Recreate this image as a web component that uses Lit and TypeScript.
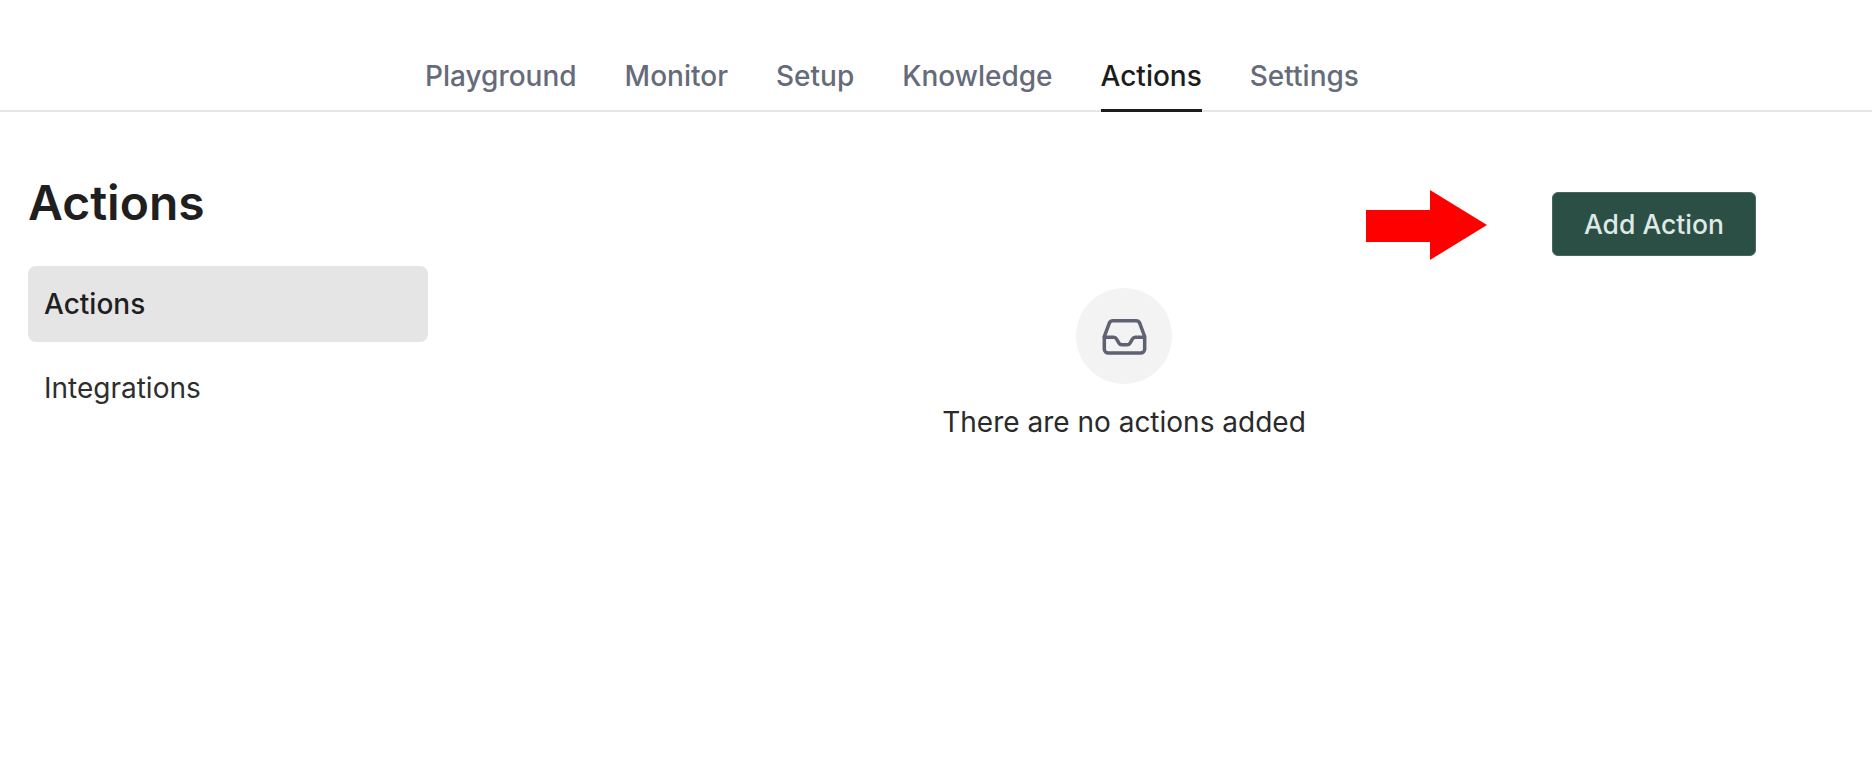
import { LitElement, html, css } from "lit";
import { customElement } from "lit/decorators.js";

@customElement("app-root")
export class AppRoot extends LitElement {
  static styles = css`
    :host { display: block; position: relative; width: 100%; height: 762px; background: #fff; overflow: hidden; font-family: Inter, "Liberation Sans", sans-serif; color: #1f1f1f; }
    .tabs { height: 112px; box-sizing: border-box; border-bottom: 2px solid #e6e6e6; display: flex; justify-content: flex-start; gap: 48px; padding-left: 425px; align-items: flex-end; }
    .tab { height: 76px; box-sizing: border-box; font-size: 28px; font-weight: 500; line-height: 34px; padding-top: 23px; color: #666b7a; margin-bottom: -2px; border-bottom: 3px solid transparent; }
    .tab.active { color: #1c1c1c; border-bottom-color: #1c1c1c; }
    .body { display: flex; }
    .side { width: 400px; margin-left: 28px; padding-top: 66px; flex: none; }
    h1 { margin: 0 0 38px; font-size: 48px; line-height: 50px; font-weight: 600; color: #1f1f1f; }
    .item { display: flex; align-items: center; height: 76px; box-sizing: border-box; padding-left: 16px; border-radius: 8px; font-size: 28px; margin-bottom: 8px; color: #2e2e2e; }
    .item.active { background: #e5e5e5; color: #1f1f1f; font-weight: 500; }
    .main { flex: 1; margin: 0 116px 0 64px; padding-top: 80px; display: flex; flex-direction: column; }
    .bar { display: flex; justify-content: flex-end; }
    .btn { width: 204px; height: 64px; box-sizing: border-box; background: #2c4f45; border: 1px solid #47685e; border-radius: 6px; color: #dfeae6; font: 500 26.5px Inter, "Liberation Sans", sans-serif; display: flex; align-items: center; justify-content: center; }
    .empty { display: flex; flex-direction: column; align-items: center; margin-top: 32px; }
    .circle { width: 96px; height: 96px; border-radius: 50%; background: #f3f3f3; display: flex; align-items: center; justify-content: center; }
    .msg { margin-top: 21px; font-size: 28px; line-height: 34px; color: #2a2a2a; }
    .arrow { position: absolute; left: 1366px; top: 190px; }
  `;

  render() {
    const tabs = ["Playground", "Monitor", "Setup", "Knowledge", "Actions", "Settings"];
    return html`
      <nav class="tabs">
        ${tabs.map((t) => html`<div class="tab ${t === "Actions" ? "active" : ""}">${t}</div>`)}
      </nav>
      <div class="body">
        <aside class="side">
          <h1>Actions</h1>
          <div class="item active">Actions</div>
          <div class="item">Integrations</div>
        </aside>
        <main class="main">
          <div class="bar"><div class="btn">Add Action</div></div>
          <div class="empty">
            <div class="circle">
              <svg width="51" height="51" viewBox="0 0 24 24" fill="none" stroke="#5f6272" stroke-width="1.65" stroke-linecap="round" stroke-linejoin="round">
                <path d="M2.5 12.4h4.4c.6 0 1.1.3 1.4.8l1.1 1.9c.3.5.8.8 1.4.8h2.4c.6 0 1.1-.3 1.4-.8l1.1-1.9c.3-.5.8-.8 1.4-.8h3.9" />
                <path d="M6.5 4.6h11c.7 0 1.3.4 1.6 1l2.4 6.4v6c0 1-.9 1.8-1.9 1.8H4.4c-1 0-1.9-.8-1.9-1.8v-6l2.4-6.4c.3-.6.9-1 1.6-1z" />
              </svg>
            </div>
            <div class="msg">There are no actions added</div>
          </div>
        </main>
      </div>
      <svg class="arrow" width="122" height="70" viewBox="0 0 122 70"><path fill="#ff0000" d="M0 20H64V0L121 35L64 70V52H0Z" /></svg>
    `;
  }
}
